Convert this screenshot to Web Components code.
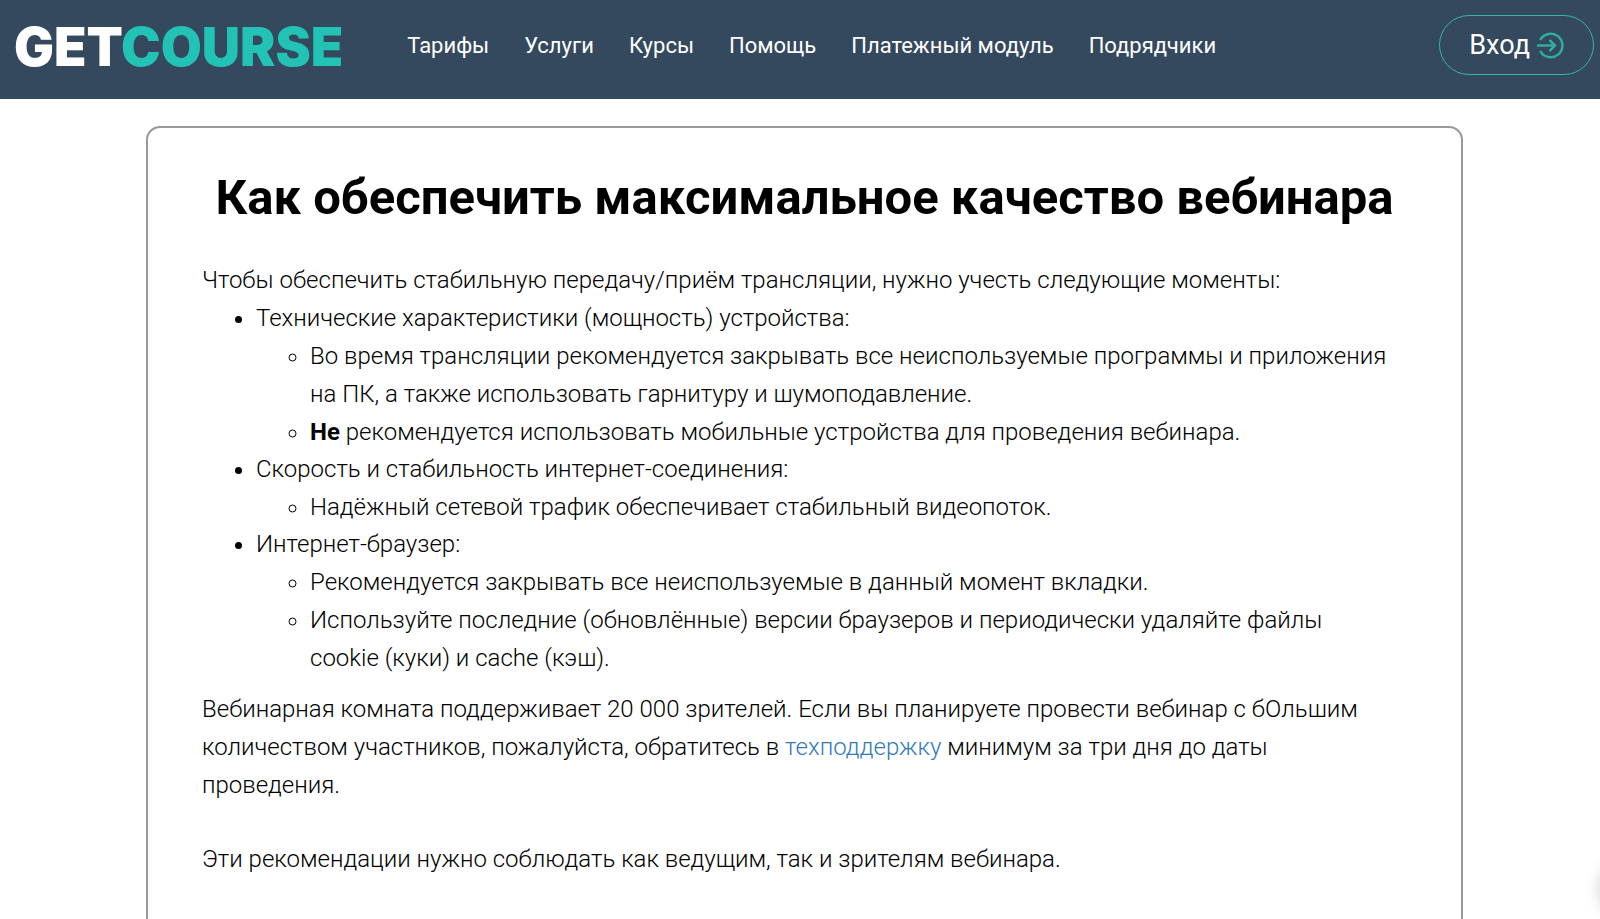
<!DOCTYPE html>
<html lang="ru">
<head>
<meta charset="utf-8">
<meta name="viewport" content="width=device-width, initial-scale=1">
<title>Как обеспечить максимальное качество вебинара</title>
<style>
  html { scrollbar-width: none; }
  body { margin: 0; background: #fff; color: #000; font-family: Roboto, sans-serif; }
</style>
</head>
<body>
<gc-page></gc-page>

<template id="gc-logo">
  <style>
    :host { display: block; padding-top: 4px; }
    a { display: block; font: 900 53px/60px Inter, sans-serif; color: #fff; text-decoration: none; }
    span { color: #22c3b4; }
  </style>
  <a href="#">GET<span>COURSE</span></a>
</template>

<template id="gc-nav-link">
  <style>
    :host { display: block; }
    a { font-size: 22px; line-height: 32px; color: #fff; text-decoration: none; white-space: nowrap; }
  </style>
  <a href="#"><slot></slot></a>
</template>

<template id="gc-login">
  <style>
    :host { display: block; }
    button { display: flex; align-items: center; gap: 7px; height: 60px; padding: 0 29px; box-sizing: border-box;
      border: 1px solid #35b5a9; border-radius: 30px; background: none; color: #fff;
      font: 400 27px/32px Roboto, sans-serif; cursor: pointer; }
    svg { display: block; width: 27px; height: 27px; }
  </style>
  <button type="button"><slot></slot>
    <svg viewBox="0 0 27 27" fill="none" stroke="#30ab9f" stroke-width="2.5" aria-hidden="true">
      <path d="M3.2 8A11.8 11.8 0 1 1 3.2 19M0 13.5H18M12.5 8L18 13.5L12.5 19"/>
    </svg>
  </button>
</template>

<template id="gc-header">
  <style>
    :host { display: block; background: #34495e; }
    header { display: flex; align-items: center; height: 99px; padding: 0 6px 9px 14px; box-sizing: border-box; }
    nav { display: flex; gap: 35px; margin-left: 64px; padding-top: 2px; flex: 1; }
  </style>
  <header>
    <gc-logo></gc-logo>
    <nav aria-label="Основное меню">
      <gc-nav-link>Тарифы</gc-nav-link>
      <gc-nav-link>Услуги</gc-nav-link>
      <gc-nav-link>Курсы</gc-nav-link>
      <gc-nav-link>Помощь</gc-nav-link>
      <gc-nav-link>Платежный модуль</gc-nav-link>
      <gc-nav-link>Подрядчики</gc-nav-link>
    </nav>
    <gc-login>Вход</gc-login>
  </header>
</template>

<template id="gc-article">
  <style>
    :host { display: block; box-sizing: border-box; border: 2px solid #999; border-radius: 14px; padding: 40px 54px 64px; }
    h1 { margin: 0 0 33px; font-size: 49px; line-height: 60px; font-weight: 700; text-align: center; }
    .text { padding-right: 14px; font-weight: 300; font-size: 24px; line-height: 38px; }
    p { margin: 0; }
    p + p { margin-top: 36px; }
    ul { margin: 0 0 14px; padding-left: 54px; }
    ul ul { margin: 0 0 -1px; }
    b { font-weight: 700; }
    a { color: #337ab7; text-decoration: none; }
  </style>
  <h1><slot name="title"></slot></h1>
  <div class="text">
    <p>Чтобы обеспечить стабильную передачу/приём трансляции, нужно учесть следующие моменты:</p>
    <ul>
      <li>Технические характеристики (мощность) устройства:
        <ul>
          <li>Во время трансляции рекомендуется закрывать все неиспользуемые программы и приложения на ПК, а также использовать гарнитуру и шумоподавление.</li>
          <li><b>Не</b> рекомендуется использовать мобильные устройства для проведения вебинара.</li>
        </ul>
      </li>
      <li>Скорость и стабильность интернет-соединения:
        <ul>
          <li>Надёжный сетевой трафик обеспечивает стабильный видеопоток.</li>
        </ul>
      </li>
      <li>Интернет-браузер:
        <ul>
          <li>Рекомендуется закрывать все неиспользуемые в данный момент вкладки.</li>
          <li>Используйте последние (обновлённые) версии браузеров и периодически удаляйте файлы cookie (куки) и cache (кэш).</li>
        </ul>
      </li>
    </ul>
    <p>Вебинарная комната поддерживает 20 000 зрителей. Если вы планируете провести вебинар с бОльшим количеством участников, пожалуйста, обратитесь в <a href="#">техподдержку</a> минимум за три дня до даты проведения.</p>
    <p>Эти рекомендации нужно соблюдать как ведущим, так и зрителям вебинара.</p>
  </div>
</template>

<template id="gc-chat">
  <style>
    :host { position: fixed; right: -60px; bottom: 0; width: 60px; height: 60px; border-radius: 50%;
      box-shadow: 0 0 16px rgba(0, 0, 0, .2); }
  </style>
</template>

<template id="gc-page">
  <style>
    :host { display: block; }
    main { display: block; padding: 27px 137px 40px 146px; }
  </style>
  <gc-header></gc-header>
  <main>
    <gc-article><span slot="title">Как обеспечить максимальное качество вебинара</span></gc-article>
  </main>
  <gc-chat></gc-chat>
</template>

<script>
  for (const name of ['gc-logo', 'gc-nav-link', 'gc-login', 'gc-header', 'gc-article', 'gc-chat', 'gc-page']) {
    customElements.define(name, class extends HTMLElement {
      constructor() {
        super();
        this.attachShadow({ mode: 'open' }).append(document.getElementById(name).content.cloneNode(true));
      }
    });
  }
</script>
</body>
</html>
